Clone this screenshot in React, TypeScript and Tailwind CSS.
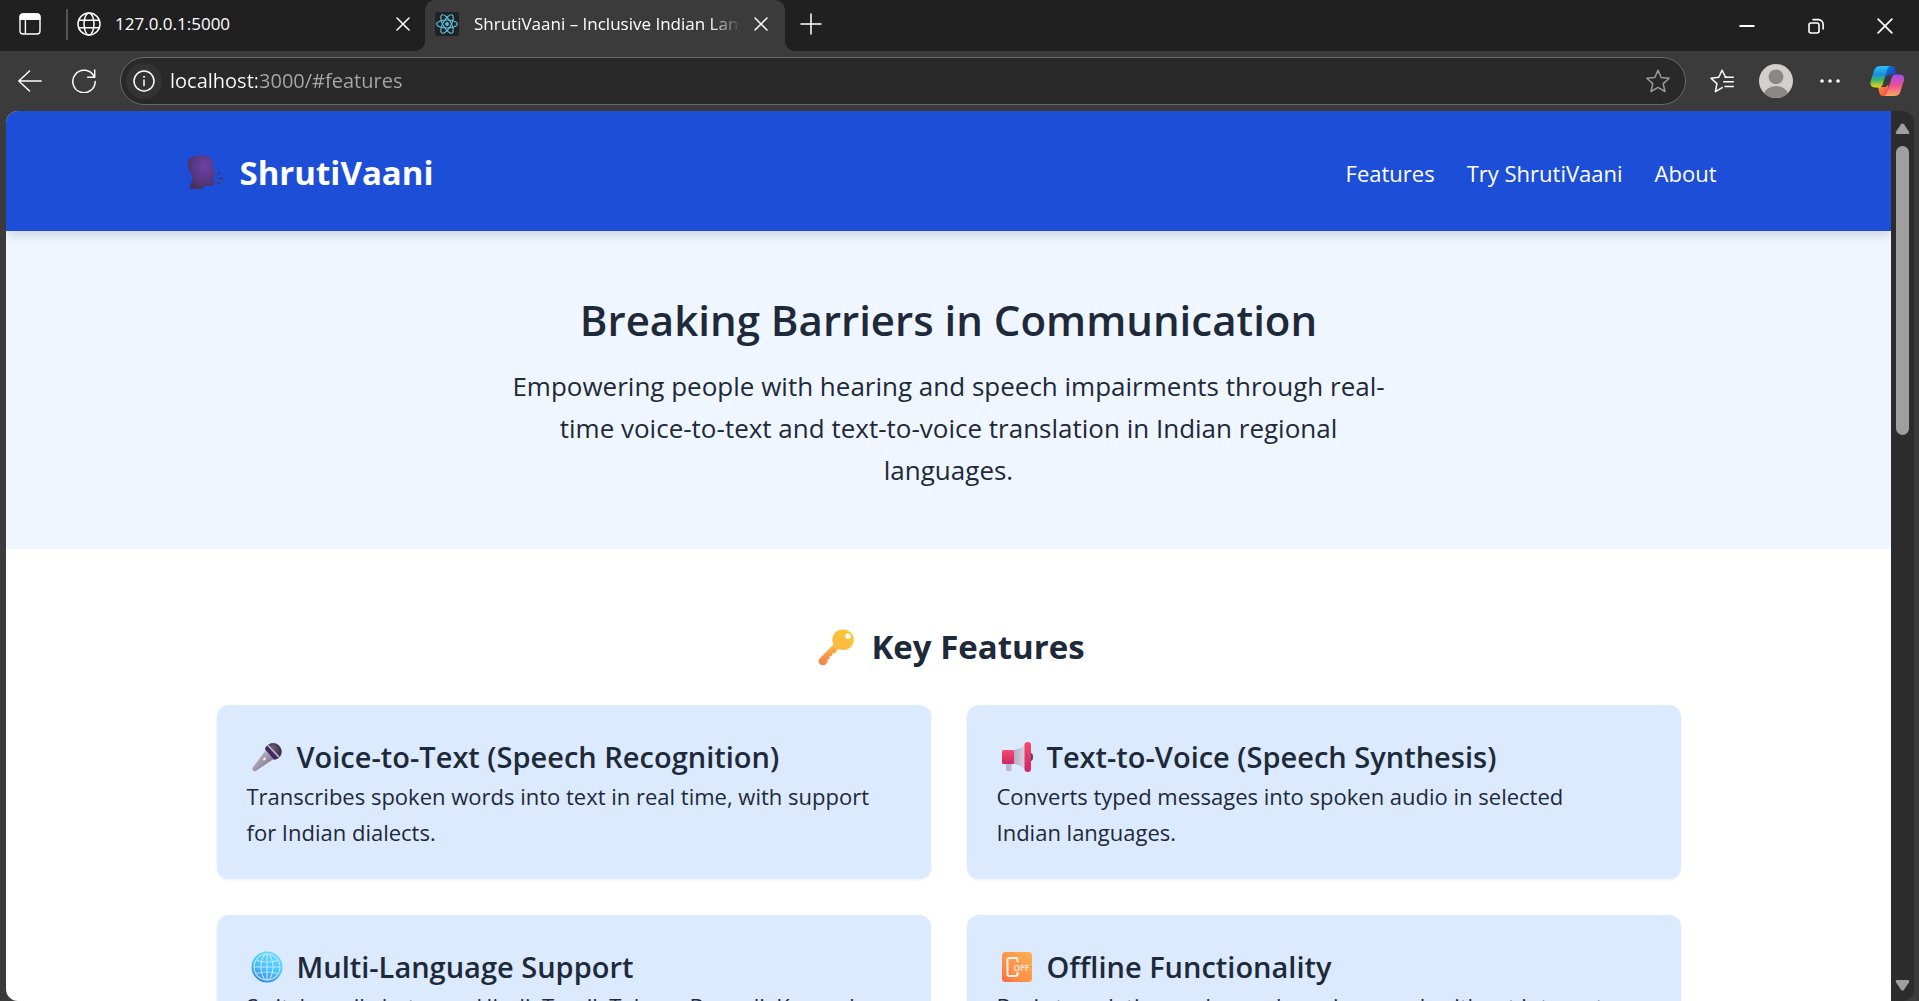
import type { ReactNode } from 'react';

type IconProps = { className?: string };

/* ---------- Browser chrome icons ---------- */

function TabActionsIcon() {
  return (
    <svg className="size-6" viewBox="0 0 24 24" fill="none" stroke="#fff" strokeWidth="1.4">
      <rect x="2" y="2" width="20" height="20" rx="3.2" />
      <path d="M2.2 7.4V5a3 3 0 0 1 3-3h13.6a3 3 0 0 1 3 3v2.4z" fill="#fff" />
      <path d="M7.4 7v15" />
    </svg>
  );
}

function GlobeIcon() {
  return (
    <svg className="size-6 shrink-0" viewBox="0 0 24 24" fill="none" stroke="#fff" strokeWidth="1.5">
      <circle cx="12" cy="12" r="11" />
      <ellipse cx="12" cy="12" rx="5" ry="11" />
      <path d="M2 8.2h20M2 15.8h20" />
    </svg>
  );
}

function ReactIcon() {
  return (
    <svg className="size-6 shrink-0" viewBox="0 0 24 24" fill="none">
      <rect width="24" height="24" rx="2.5" fill="#212225" />
      <g stroke="#58c4dc" strokeWidth="1.1">
        <ellipse cx="12" cy="12" rx="10.4" ry="4" />
        <ellipse cx="12" cy="12" rx="10.4" ry="4" transform="rotate(60 12 12)" />
        <ellipse cx="12" cy="12" rx="10.4" ry="4" transform="rotate(120 12 12)" />
      </g>
      <circle cx="12" cy="12" r="1.9" fill="#58c4dc" />
    </svg>
  );
}

function CrossIcon({ className }: IconProps) {
  return (
    <svg className={className} viewBox="0 0 14 14" stroke="#fff" strokeWidth="1.5" strokeLinecap="round">
      <path d="M1 1l12 12M13 1L1 13" />
    </svg>
  );
}

function PlusIcon() {
  return (
    <svg className="size-[22px]" viewBox="0 0 22 22" stroke="#fff" strokeWidth="1.5" strokeLinecap="round">
      <path d="M11 1v20M1 11h20" />
    </svg>
  );
}

function MinimizeIcon() {
  return (
    <svg className="size-4" viewBox="0 0 16 16" stroke="#fff" strokeWidth="2">
      <path d="M.5 8h15" />
    </svg>
  );
}

function RestoreIcon() {
  return (
    <svg className="size-4" viewBox="0 0 16 16" fill="none" stroke="#fff" strokeWidth="1.6" strokeLinecap="round">
      <rect x="1" y="5" width="10" height="10" rx="2" />
      <path d="M5 1.6h5.5a4.6 4.6 0 0 1 4.6 4.6V11" />
    </svg>
  );
}

function BackIcon() {
  return (
    <svg className="size-6" viewBox="0 0 24 24" fill="none" stroke="#fff" strokeWidth="1.5" strokeLinecap="round" strokeLinejoin="round">
      <path d="M23.2 12H.8M11.5 2L.8 12l10.7 10" />
    </svg>
  );
}

function ReloadIcon() {
  return (
    <svg className="size-6" viewBox="0 0 24 24" fill="none" stroke="#fff" strokeWidth="1.5" strokeLinecap="round" strokeLinejoin="round">
      <path d="M23.2 12.4A11.2 11.2 0 1 1 22 7.4M22.7 1v7.2h-7" />
    </svg>
  );
}

function InfoIcon() {
  return (
    <svg className="size-[22px]" viewBox="0 0 22 22" fill="none" stroke="#fff" strokeWidth="1.5" strokeLinecap="round">
      <circle cx="11" cy="11" r="10" />
      <path d="M11 10v5.5" />
      <circle cx="11" cy="6.8" r=".6" fill="#fff" strokeWidth=".8" />
    </svg>
  );
}

function StarIcon() {
  return (
    <svg className="size-6" viewBox="0 0 24 24" fill="none" stroke="#9a9a9a" strokeWidth="1.5" strokeLinejoin="round">
      <path d="M12 1.2l3.2 7.3 8 .8-6 5.3 1.8 7.9-7-4.1-7 4.1 1.8-7.900-6-5.300 8-.8z" />
    </svg>
  );
}

function FavoritesIcon() {
  return (
    <svg className="size-6" viewBox="0 0 24 24" fill="none" stroke="#fff" strokeWidth="1.5" strokeLinejoin="round" strokeLinecap="round">
      <path d="M12.2 18.6L5.4 22.6l1.500-8L1 9.200l7.800-1L12 1.200l3.200 6.300 1.600.5M15 8.200h8.300M13.800 12.800h9.500M15 17.400h8.300" />
    </svg>
  );
}

function AvatarIcon() {
  return (
    <svg className="size-[34px]" viewBox="0 0 34 34">
      <clipPath id="avatar-clip">
        <circle cx="17" cy="17" r="17" />
      </clipPath>
      <g clipPath="url(#avatar-clip)">
        <rect width="34" height="34" fill="#d2d0ce" />
        <circle cx="17" cy="12.8" r="7.4" fill="#8a8886" />
        <ellipse cx="17" cy="32" rx="12.4" ry="10" fill="#8a8886" />
      </g>
    </svg>
  );
}

function DotsIcon() {
  return (
    <svg className="h-1 w-5" viewBox="0 0 20 4" fill="#fff">
      <circle cx="2" cy="2" r="1.8" />
      <circle cx="10" cy="2" r="1.8" />
      <circle cx="18" cy="2" r="1.8" />
    </svg>
  );
}

function CopilotIcon() {
  return (
    <svg className="h-8 w-[34px]" viewBox="0 0 34 32">
      <defs>
        <linearGradient id="cp-a" x1="0" y1="0" x2="0" y2="1">
          <stop offset="0" stopColor="#2cc0f5" />
          <stop offset=".4" stopColor="#158fe0" />
          <stop offset=".65" stopColor="#3fb56b" />
          <stop offset="1" stopColor="#f7d414" />
        </linearGradient>
        <linearGradient id="cp-b" x1="0" y1="0" x2="0" y2="1">
          <stop offset="0" stopColor="#a04df0" />
          <stop offset=".5" stopColor="#ee4f96" />
          <stop offset="1" stopColor="#fda95c" />
        </linearGradient>
        <linearGradient id="cp-c" x1="0" y1="0" x2="1" y2="1">
          <stop offset="0" stopColor="#1676d8" />
          <stop offset="1" stopColor="#1340c0" />
        </linearGradient>
        <linearGradient id="cp-d" x1="0" y1="0" x2="1" y2="1">
          <stop offset="0" stopColor="#fb9a3a" />
          <stop offset="1" stopColor="#ef3e4c" />
        </linearGradient>
      </defs>
      <path d="M15 1h6.500c2 0 3 1 3.600 3l1.200 5.500H20c-2 0-3.500 1-4.200 3z" fill="url(#cp-c)" />
      <path d="M19.500 31H13c-2 0-3-1-3.600-3L8 22h6c2 0 3.600-1 4.300-3z" fill="url(#cp-d)" />
      <path d="M10.500 1H21c-2 0-3.100 1.200-3.800 3.500L13 18.500C12.300 21 11 22.500 8.500 22.500H5c-4 0-5.300-2.800-4.300-6.300L4 5.500C5 2.500 7 1 10.500 1z" fill="url(#cp-a)" />
      <path d="M24 31H13.500c2 0 3.100-1.200 3.800-3.500l4.200-14C22.200 11 23.500 9.500 26 9.500h3.500c4 0 5.300 2.800 4.300 6.300l-3.300 10.700C29.500 29.500 27.500 31 24 31z" fill="url(#cp-b)" />
    </svg>
  );
}

/* ---------- Page pictograms ---------- */

function SpeakingHead() {
  return (
    <svg className="mr-[17px] ml-1.5 size-9" viewBox="0 0 36 36" aria-hidden="true">
      <defs>
        <radialGradient id="head" cx=".6" cy=".35" r=".7">
          <stop offset="0" stopColor="#6d42a6" />
          <stop offset=".6" stopColor="#573783" />
          <stop offset="1" stopColor="#46305f" />
        </radialGradient>
      </defs>
      <path d="M14.500 0C6 0 .5 3 .5 8.500c0 4 1.500 7.500 3.300 10.500 1.700 3 1.700 5.500.4 8.500-.9 2-1.500 4.500-1.600 6.500H15.500l2-3h6c2.500 0 3.700-1 3.900-3.500l.2-2-3.100-1.500 3.100-1.300V20l1-1c-1-1.500-2-3.500-2.100-6.500C26.200 4.500 23 0 14.500 0z" fill="url(#head)" />
      <path d="M29.500 20.500l2.500-4 2 1.800zM30 23.500l6-1.300v2.800zM29.500 26l4.500 2.600-1.800 2.200z" fill="#4a3566" />
    </svg>
  );
}

function KeyPicture() {
  return (
    <svg className="mr-[17px] ml-1.5 size-9" viewBox="0 0 36 36" aria-hidden="true">
      <defs>
        <linearGradient id="key" x1="1" y1="0" x2="0" y2="1">
          <stop offset="0" stopColor="#fbc92f" />
          <stop offset=".5" stopColor="#f9b847" />
          <stop offset="1" stopColor="#f4804f" />
        </linearGradient>
      </defs>
      <path
        d="M25.500.5a10.300 10.300 0 1 1-4.200 19.700l-2 .6-1.800 3.200-2.800.6-1 2.600-2.300.4.300 2.500-2 .7-.3 2.600-1.600 1.800c-1.600 1.600-4.300 1.500-6-.2-1.600-1.600-1.700-4-.2-5.600L15.500 15.500A10.300 10.300 0 0 1 25.500.5zM30 4.600a2.700 2.700 0 1 0 0 5.400 2.700 2.700 0 0 0 0-5.400z"
        fill="url(#key)"
        fillRule="evenodd"
      />
      <path d="M3 33.500L17.500 19" stroke="#ee8a4a" strokeOpacity=".45" strokeWidth="1.200" />
    </svg>
  );
}

function MicrophonePicture() {
  return (
    <svg className="size-8" viewBox="0 0 32 32" aria-hidden="true">
      <defs>
        <linearGradient id="mic-body" x1="0" y1="0" x2="1" y2="1">
          <stop offset=".2" stopColor="#c4bccb" />
          <stop offset=".8" stopColor="#7d7388" />
        </linearGradient>
        <radialGradient id="mic-head" cx=".4" cy=".35" r=".7">
          <stop offset="0" stopColor="#6b5c78" />
          <stop offset="1" stopColor="#33263f" />
        </radialGradient>
      </defs>
      <path d="M14.500 9.500l8 8.500L5.500 29.500c-1.200.9-2.600.9-3.500 0-.9-1-.9-2.300 0-3.500z" fill="url(#mic-body)" />
      <path d="M15.500 5.500C18 1.500 24 .8 28 4.500c3.800 3.800 3.500 9.500-.5 12.500z" fill="url(#mic-head)" />
      <path d="M14 8.500c.2-2 1-3.200 2.200-4L28 16.500c-1 1.300-3 2.200-5 2.200z" fill="#42285c" />
      <path d="M16.700 4.200l11.300 12" stroke="#b9a9cc" strokeWidth="1.800" />
      <ellipse cx="13.500" cy="18" rx="1.200" ry="1.800" transform="rotate(45 13.500 18)" fill="#efeaf3" />
    </svg>
  );
}

function MegaphonePicture() {
  return (
    <svg className="size-8" viewBox="0 0 32 32" aria-hidden="true">
      <defs>
        <linearGradient id="mega-cone" x1="0" y1="0" x2="1" y2="0">
          <stop offset="0" stopColor="#b3a9c4" />
          <stop offset="1" stopColor="#dcd8e6" />
        </linearGradient>
        <linearGradient id="mega-red" x1="0" y1="0" x2="0" y2="1">
          <stop offset="0" stopColor="#fb4a6c" />
          <stop offset="1" stopColor="#c92668" />
        </linearGradient>
      </defs>
      <path d="M5 22h5.500v6.500c0 1-.7 1.500-1.500 1.500H6.500C5.700 30 5 29.500 5 28.500z" fill="#beb3d6" />
      <ellipse cx="29.500" cy="16" rx="2.500" ry="4" fill="#55405e" />
      <path d="M12 9c5-.4 9.500-2.500 13-6v26c-3.500-3.500-8-5.600-13-6z" fill="url(#mega-cone)" />
      <rect x="1" y="9" width="12" height="14" rx="1.500" fill="url(#mega-red)" />
      <rect x="23.500" y="1" width="6.500" height="30" rx="3.200" fill="url(#mega-red)" />
    </svg>
  );
}

function GlobePicture() {
  return (
    <svg className="size-8" viewBox="0 0 32 32" aria-hidden="true">
      <defs>
        <linearGradient id="globe" x1=".7" y1="0" x2=".3" y2="1">
          <stop offset="0" stopColor="#6adcff" />
          <stop offset=".55" stopColor="#48c0fd" />
          <stop offset="1" stopColor="#3a84e4" />
        </linearGradient>
      </defs>
      <circle cx="16" cy="16" r="15.500" fill="url(#globe)" />
      <g fill="none" stroke="#c0e8fd" strokeWidth="1.100">
        <circle cx="16" cy="16" r="13" />
        <ellipse cx="16" cy="16" rx="6" ry="13" />
        <path d="M16 3v26M3 16h26M5.500 9.500c6 2 15 2 21 0M5.500 22.500c6-2 15-2 21 0" />
      </g>
    </svg>
  );
}

function PhoneOffPicture() {
  return (
    <svg className="size-8" viewBox="0 0 32 32" aria-hidden="true">
      <defs>
        <linearGradient id="off-tile" x1="1" y1="0" x2="0" y2="1">
          <stop offset="0" stopColor="#ffb054" />
          <stop offset=".6" stopColor="#ff9248" />
          <stop offset="1" stopColor="#fb6a3c" />
        </linearGradient>
      </defs>
      <rect x="1" y="1" width="30" height="30" rx="3.500" fill="url(#off-tile)" />
      <path d="M16.500 11V8.500a1.500 1.500 0 0 0-1.500-1.500H8a1.500 1.500 0 0 0-1.500 1.500v15A1.500 1.500 0 0 0 8 25h7a1.500 1.500 0 0 0 1.500-1.500V21" fill="none" stroke="#fff3ec" strokeWidth="2" />
      <text x="12.500" y="19.500" fill="#fff3ec" fontSize="8.500" fontWeight="600" fontFamily="Open Sans, sans-serif">
        OFF
      </text>
    </svg>
  );
}

/* ---------- Building blocks ---------- */

function WindowButton({ label, children }: { label: string; children: ReactNode }) {
  return (
    <button type="button" aria-label={label} className="flex w-[69px] items-center justify-center">
      {children}
    </button>
  );
}

function ToolButton({ label, children }: { label: string; children: ReactNode }) {
  return (
    <button type="button" aria-label={label} className="flex size-9 shrink-0 items-center justify-center">
      {children}
    </button>
  );
}

function TitleBar() {
  return (
    <div className="flex h-[51px] shrink-0 bg-[#3b3b3b]">
      <div className="flex items-center rounded-br-[10px] bg-[#202020] pb-[3px] pl-3">
        <ToolButton label="Tab actions">
          <TabActionsIcon />
        </ToolButton>
        <div className="ml-[18px] h-[31px] w-0.5 bg-[#555]" />
        <div className="flex w-[357px] items-center gap-3.5 pr-2.5 pl-[9px]">
          <GlobeIcon />
          <button type="button" className="min-w-0 flex-1 text-left text-[17px] text-white">
            127.0.0.1:5000
          </button>
          <button type="button" aria-label="Close tab" className="flex size-6 items-center justify-center">
            <CrossIcon className="size-3.5" />
          </button>
        </div>
      </div>
      <div className="bg-[#202020]">
        <div className="flex h-full w-[360px] items-center rounded-t-[10px] bg-[#3b3b3b] pr-3 pb-[3px] pl-2.5">
          <ReactIcon />
          <button
            type="button"
            className="ml-[15px] min-w-0 flex-1 overflow-hidden text-left text-[17px] whitespace-nowrap text-white [mask-image:linear-gradient(to_right,#000_88%,transparent)]"
          >
            ShrutiVaani – Inclusive Indian Language Assistant
          </button>
          <button type="button" aria-label="Close tab" className="ml-2 flex size-6 items-center justify-center">
            <CrossIcon className="size-3.5" />
          </button>
        </div>
      </div>
      <div className="flex flex-1 items-center rounded-bl-[10px] bg-[#202020] pl-2">
        <div className="pb-[3px]">
          <ToolButton label="New tab">
            <PlusIcon />
          </ToolButton>
        </div>
        <div className="ml-auto flex self-stretch">
          <WindowButton label="Minimize">
            <MinimizeIcon />
          </WindowButton>
          <WindowButton label="Restore">
            <RestoreIcon />
          </WindowButton>
          <WindowButton label="Close">
            <CrossIcon className="size-4" />
          </WindowButton>
        </div>
      </div>
    </div>
  );
}

function Toolbar() {
  return (
    <div className="flex h-[60px] shrink-0 items-center gap-[18px] pr-[11px] pl-3">
      <ToolButton label="Back">
        <BackIcon />
      </ToolButton>
      <ToolButton label="Refresh">
        <ReloadIcon />
      </ToolButton>
      <div className="flex h-12 min-w-0 flex-1 items-center rounded-full border border-[#6a6a6a] bg-[#292929] pr-[9px] pl-[5px]">
        <button type="button" aria-label="Site information" className="flex size-9 items-center justify-center rounded-full bg-[#333]">
          <InfoIcon />
        </button>
        <input
          aria-label="Address"
          defaultValue="localhost:3000/#features"
          className="ml-2 min-w-0 flex-1 bg-linear-to-r from-white from-[87px] to-[#a8a8a8] to-[87px] bg-clip-text text-[20px] text-transparent outline-none"
        />
        <ToolButton label="Add to favorites">
          <StarIcon />
        </ToolButton>
      </div>
      <ToolButton label="Favorites">
        <FavoritesIcon />
      </ToolButton>
      <ToolButton label="Profile">
        <AvatarIcon />
      </ToolButton>
      <ToolButton label="Settings and more">
        <DotsIcon />
      </ToolButton>
      <button type="button" aria-label="Copilot" className="flex w-[42px] justify-center">
        <CopilotIcon />
      </button>
    </div>
  );
}

function ScrollRail() {
  return (
    <div aria-hidden="true" className="flex w-[23px] shrink-0 flex-col items-center bg-[#2c2c2c] pt-3 pb-2.5">
      <svg className="h-3 w-[15px]" viewBox="0 0 15 12">
        <path d="M6 1.300a2 2 0 0 1 3 0l5 7.400c.8 1.200 0 2.300-1.300 2.300H2.300C1 11 .2 9.900 1 8.700z" fill="#9f9f9f" />
      </svg>
      <div className="mt-[11px] h-[289px] w-[13px] rounded-full bg-[#9f9f9f]" />
      <svg className="mt-auto h-3 w-[15px]" viewBox="0 0 15 12">
        <path d="M6 10.700a2 2 0 0 0 3 0l5-7.400C14.800 2.100 14 1 12.700 1H2.300C1 1 .2 2.100 1 3.300z" fill="#9f9f9f" />
      </svg>
    </div>
  );
}

const features = [
  {
    icon: <MicrophonePicture />,
    title: 'Voice-to-Text (Speech Recognition)',
    text: 'Transcribes spoken words into text in real time, with support for Indian dialects.',
  },
  {
    icon: <MegaphonePicture />,
    title: 'Text-to-Voice (Speech Synthesis)',
    text: 'Converts typed messages into spoken audio in selected Indian languages.',
  },
  {
    icon: <GlobePicture />,
    title: 'Multi-Language Support',
    text: 'Switch easily between Hindi, Tamil, Telugu, Bengali, Kannada',
  },
  {
    icon: <PhoneOffPicture />,
    title: 'Offline Functionality',
    text: 'Basic translation and speech engines work without internet',
  },
];

function LandingPage() {
  return (
    <div className="min-w-0 flex-1 overflow-hidden bg-white text-gray-800">
      <header className="relative bg-[#1d4ed8] pt-[38px] pb-[34px] text-white shadow-[0_6px_9px_-1px_rgba(0,0,0,0.12)]">
        <div className="mx-auto flex max-w-[1536px] items-center justify-between">
          <h1 className="flex items-center text-[33px] leading-[48px] font-bold">
            <SpeakingHead />
            ShrutiVaani
          </h1>
          <nav className="flex gap-8 text-[22px] leading-9">
            <a href="#features">Features</a>
            <a href="#try">Try ShrutiVaani</a>
            <a href="#about">About</a>
          </nav>
        </div>
      </header>

      <section className="bg-[#eff6ff] pt-[62px] pb-[58px] text-center">
        <h2 className="mb-[18px] text-[42px] leading-[54px] font-semibold">Breaking Barriers in Communication</h2>
        <p className="mx-auto max-w-[888px] text-[26px] leading-[42px]">
          Empowering people with hearing and speech impairments through real-time voice-to-text and text-to-voice
          translation in Indian regional languages.
        </p>
      </section>

      <section id="features" className="mx-auto max-w-[1536px] px-9 pt-[74px] pb-[70px]">
        <h3 className="mb-[34px] flex items-center justify-center text-[33px] leading-[48px] font-bold">
          <KeyPicture />
          Key Features
        </h3>
        <div className="grid grid-cols-2 gap-9">
          {features.map((feature) => (
            <article key={feature.title} className="rounded-xl bg-[#dbeafe] px-[30px] pt-[31px] pb-[29px] shadow-[0_1px_3px_rgba(0,0,0,0.08)]">
              <h4 className="flex items-center gap-3.5 pl-1 text-[29px] leading-[42px] font-semibold">
                {feature.icon}
                {feature.title}
              </h4>
              <p className="pr-6 text-[22px] leading-9">{feature.text}</p>
            </article>
          ))}
        </div>
      </section>
    </div>
  );
}

export default function App() {
  return (
    <div className="flex h-screen flex-col overflow-hidden bg-[#3b3b3b] font-['Open_Sans',sans-serif]">
      <TitleBar />
      <Toolbar />
      <div className="mr-[5px] ml-1.5 flex min-h-0 flex-1 overflow-hidden rounded-xl">
        <LandingPage />
        <ScrollRail />
      </div>
    </div>
  );
}
